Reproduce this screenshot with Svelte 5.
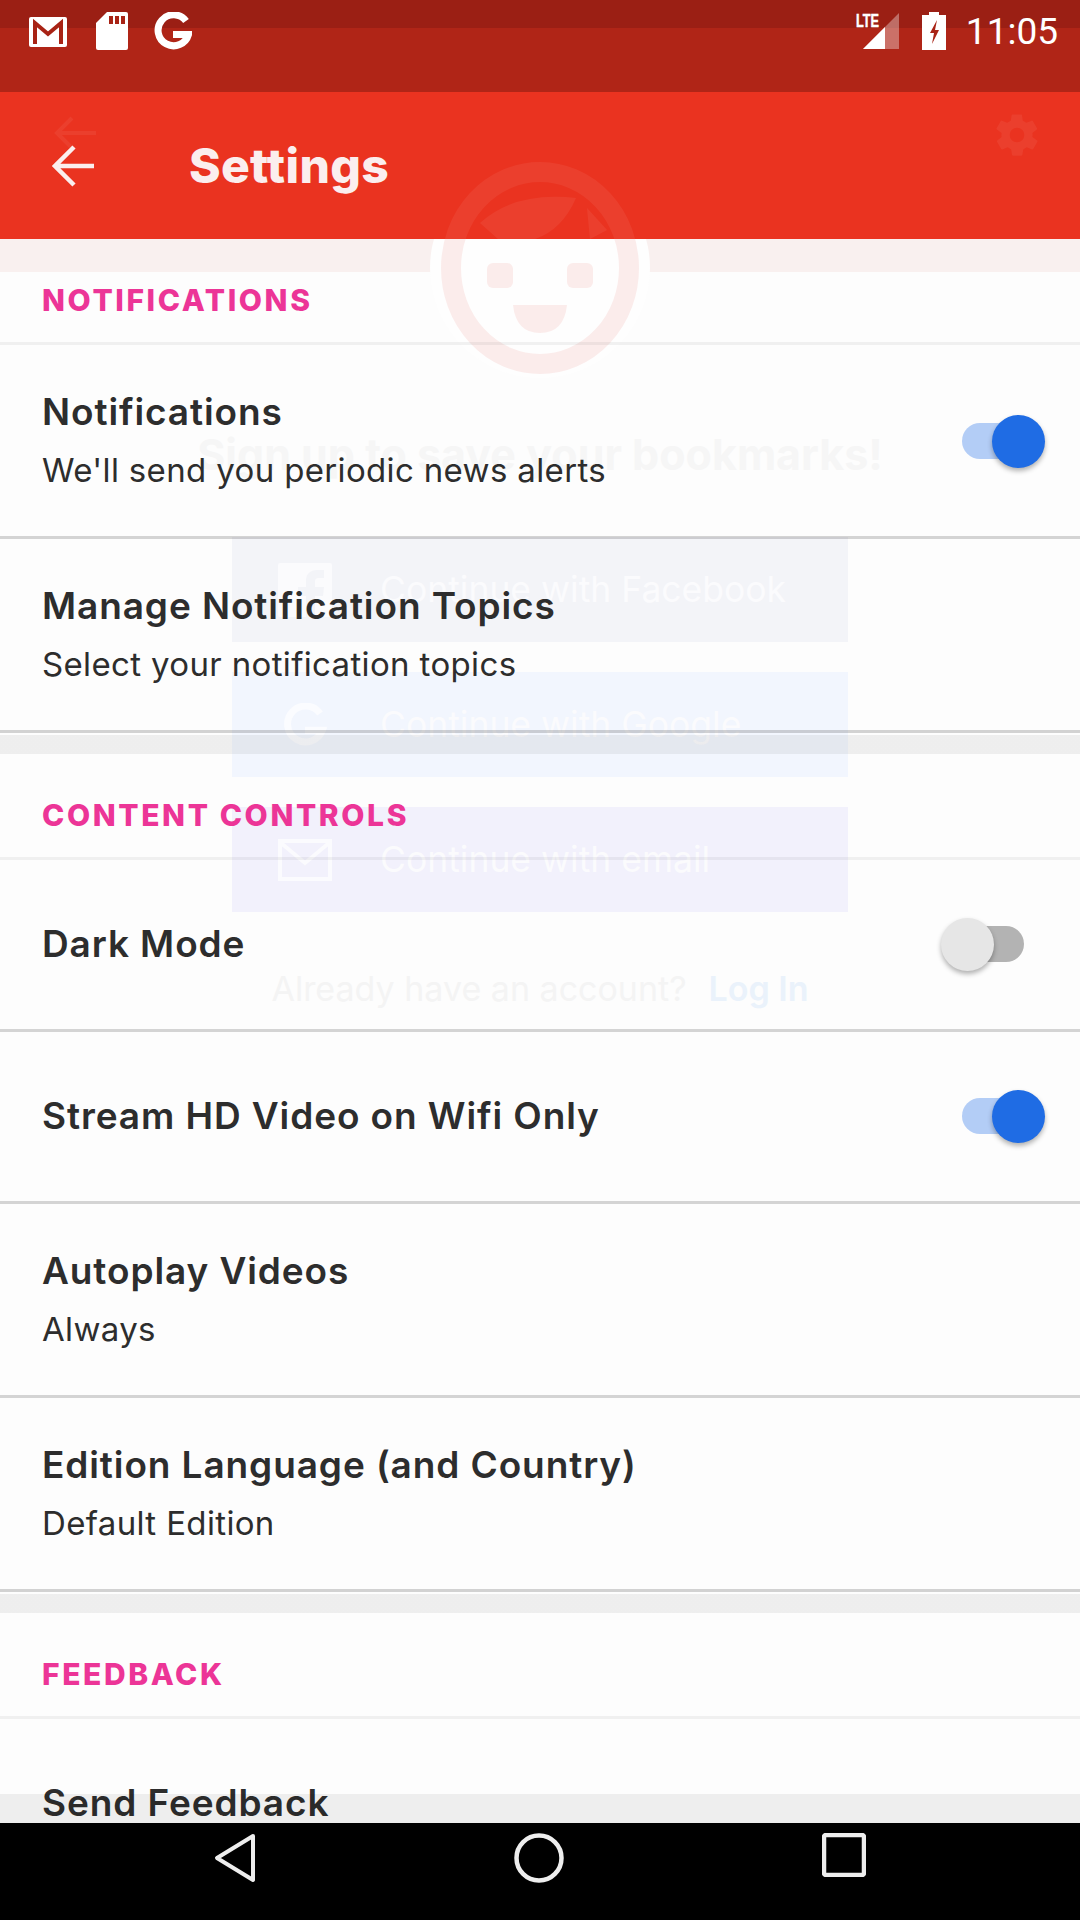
<script>
	const sections = [
		{
			title: 'NOTIFICATIONS',
			rows: [
				{ title: 'Notifications', sub: "We'll send you periodic news alerts", toggle: 'on' },
				{ title: 'Manage Notification Topics', sub: 'Select your notification topics' }
			]
		},
		{
			title: 'CONTENT CONTROLS',
			rows: [
				{ title: 'Dark Mode', toggle: 'off' },
				{ title: 'Stream HD Video on Wifi Only', toggle: 'on' },
				{ title: 'Autoplay Videos', sub: 'Always' },
				{ title: 'Edition Language (and Country)', sub: 'Default Edition' }
			]
		},
		{
			title: 'FEEDBACK',
			rows: [{ title: 'Send Feedback' }]
		}
	];
</script>

<div class="page">
	<div class="status">
		<div class="status-left">
			<svg width="40" height="32" viewBox="0 0 40 32">
				<rect x="1" y="1" width="38" height="30" rx="2" fill="#fff" />
				<path d="M7 28V7l13 11L33 7v21" fill="none" stroke="#a82315" stroke-width="4" />
			</svg>
			<svg width="32" height="38" viewBox="0 0 32 38">
				<path d="M11 0h19a2 2 0 0 1 2 2v34a2 2 0 0 1-2 2H2a2 2 0 0 1-2-2V11z" fill="#fff" />
				<path d="M13 4h4v8h-4zM19 4h4v8h-4zM25 4h4v8h-4z" fill="#a82315" />
			</svg>
			<svg width="38" height="38" viewBox="0 0 38 38">
				<path d="M32 9A15.5 15.5 0 1 0 34.500 22.500H19" fill="none" stroke="#fff" stroke-width="7" />
			</svg>
		</div>
		<div class="status-right">
			<svg class="signal" width="46" height="38" viewBox="0 0 46 38">
				<path d="M45 1v36H9z" fill="#fff" opacity="0.35" />
				<path d="M31 15v22H9z" fill="#fff" />
				<text x="2" y="15" textLength="23" lengthAdjust="spacingAndGlyphs" class="lte">LTE</text>
			</svg>
			<svg width="24" height="38" viewBox="0 0 24 38">
				<path d="M7 0h10v3h7v35H0V3h7z" fill="#fff" />
				<path d="M15 8l-7 13h4l-2 11 7-14h-4z" fill="#a82315" />
			</svg>
			<span class="time">11:05</span>
		</div>
	</div>

	<header class="appbar">
		<svg width="44" height="44" viewBox="0 0 44 44">
			<path d="M42 22H4M22 3L3 22l19 19" fill="none" stroke="#fbeeee" stroke-width="4.5" />
		</svg>
		<h1>Settings</h1>
	</header>

	<!-- the sign up screen fading out behind the settings list -->
	<div class="ghost">
		<div class="ghost-band"></div>
		<svg class="ghost-back" width="42" height="34" viewBox="0 0 42 34">
			<path d="M42 17H3M18 2L3 17l15 15" fill="none" stroke="#fff" stroke-opacity="0.06" stroke-width="4" />
		</svg>
		<svg class="ghost-gear" width="50" height="50" viewBox="0 0 24 24">
			<path
				fill="#fff"
				fill-opacity="0.06"
				d="M19.4 13c0-.3.1-.6.1-1s0-.7-.1-1l2.100-1.600c.2-.2.2-.4.1-.6l-2-3.500c-.1-.2-.4-.3-.6-.2l-2.500 1c-.5-.4-1.100-.7-1.700-1l-.4-2.600c0-.2-.2-.4-.5-.4h-4c-.3 0-.5.2-.5.400l-.4 2.600c-.6.300-1.200.6-1.700 1l-2.500-1c-.2-.1-.5 0-.6.200l-2 3.500c-.1.200-.1.400.1.600L4.600 11c0 .3-.1.600-.1 1s0 .7.1 1l-2.100 1.600c-.2.200-.2.400-.1.600l2 3.500c.1.200.4.300.6.200l2.500-1c.5.400 1.100.700 1.700 1l.4 2.600c0 .2.200.4.500.4h4c.3 0 .5-.2.5-.4l.4-2.600c.6-.3 1.200-.6 1.700-1l2.500 1c.2.100.5 0 .6-.2l2-3.500c.1-.2.100-.4-.1-.6zM12 15.500a3.500 3.500 0 1 1 0-7 3.500 3.500 0 0 1 0 7z"
			/>
		</svg>

		<svg class="logo" width="220" height="220" viewBox="0 0 220 220">
			<defs>
				<linearGradient id="logo-ink" gradientUnits="userSpaceOnUse" x1="0" y1="0" x2="0" y2="220">
					<stop offset="0.368" stop-color="#fff" stop-opacity="0.06" />
					<stop offset="0.368" stop-color="#fbeceb" />
				</linearGradient>
				<linearGradient id="logo-halo" gradientUnits="userSpaceOnUse" x1="0" y1="0" x2="0" y2="220">
					<stop offset="0.368" stop-color="#fff" stop-opacity="0" />
					<stop offset="0.368" stop-color="#fefefe" />
				</linearGradient>
			</defs>
			<ellipse cx="110" cy="110" rx="110" ry="110" fill="url(#logo-halo)" />
			<ellipse cx="110" cy="110" rx="89" ry="96" fill="none" stroke="url(#logo-ink)" stroke-width="20" />
			<path d="M50 65Q85 33 146 40Q132 72 105 81H68z" fill="url(#logo-ink)" />
			<path d="M157 50l20 22-17 9z" fill="url(#logo-ink)" />
			<rect x="57" y="105" width="26" height="25" rx="6" fill="url(#logo-ink)" />
			<rect x="137" y="105" width="26" height="25" rx="6" fill="url(#logo-ink)" />
			<path d="M83 147h54q-3 28-27 28t-27-28z" fill="url(#logo-ink)" />
		</svg>

		<h2>Sign up to save your bookmarks!</h2>

		<div class="ghost-btn fb">
			<svg width="54" height="54" viewBox="0 0 54 54">
				<path d="M2 0h50a2 2 0 0 1 2 2v50a2 2 0 0 1-2 2H37V33h8l1-9h-9v-5c0-3 1-4 4-4h5V7h-7c-7 0-11 4-11 11v6h-8v9h8v21H2a2 2 0 0 1-2-2V2a2 2 0 0 1 2-2z" fill="#fbfbfd" />
			</svg>
			<span>Continue with Facebook</span>
		</div>
		<div class="ghost-btn google">
			<svg width="54" height="44" viewBox="0 0 38 38">
				<path d="M32 9A15.500 15.500 0 1 0 34 23.500H19" fill="none" stroke="#fbfcff" stroke-width="6" />
			</svg>
			<span>Continue with Google</span>
		</div>
		<div class="ghost-btn email">
			<svg width="54" height="42" viewBox="0 0 54 42">
				<path d="M2 2h50v38H2zM3 4l24 20L51 4" fill="none" stroke="#fbfbfe" stroke-width="4" />
			</svg>
			<span>Continue with email</span>
		</div>

		<p class="ghost-login">Already have an account?<span>Log In</span></p>
	</div>

	<main class="list">
		{#each sections as section}
			<section>
				<h3>{section.title}</h3>
				{#each section.rows as row}
					<div class="row">
						<div class="row-text">
							<div class="row-title">{row.title}</div>
							{#if row.sub}
								<div class="row-sub">{row.sub}</div>
							{/if}
						</div>
						{#if row.toggle}
							<div class="toggle {row.toggle}">
								<div class="track"></div>
								<div class="thumb"></div>
							</div>
						{/if}
					</div>
				{/each}
			</section>
		{/each}
	</main>

	<div class="bottom-fade"></div>

	<nav class="navbar">
		<svg width="42" height="50" viewBox="0 0 42 50">
			<path d="M39 3L3 25l36 22z" fill="none" stroke="#eee" stroke-width="4" stroke-linejoin="round" />
		</svg>
		<svg width="50" height="50" viewBox="0 0 50 50">
			<circle cx="25" cy="25" r="22.500" fill="none" stroke="#eee" stroke-width="4.500" />
		</svg>
		<svg width="44" height="44" viewBox="0 0 44 44">
			<rect x="2" y="2" width="40" height="40" rx="2" fill="none" stroke="#eee" stroke-width="4.500" />
		</svg>
	</nav>
</div>

<style>
	:global(body) {
		margin: 0;
		background: #fdfdfd;
	}
	.page {
		position: relative;
		width: 1080px;
		height: 1920px;
		overflow: hidden;
		display: flex;
		flex-direction: column;
		background: #fdfdfd;
		font-family: Inter, 'Liberation Sans', sans-serif;
		color: #2d2d2d;
	}

	.status {
		height: 92px;
		flex: none;
		display: flex;
		justify-content: space-between;
		padding: 12px 22px 0 28px;
		box-sizing: border-box;
		background: linear-gradient(#9b1f14 28px, #b02517 28px);
	}
	.status-left {
		display: flex;
		align-items: flex-start;
		gap: 28px;
	}
	.status-left svg:first-child {
		margin-top: 4px;
	}
	.status-left svg:last-child {
		margin-left: -2px;
	}
	.status-right {
		display: flex;
		align-items: flex-start;
		gap: 22px;
	}
	.lte {
		font: 700 18px 'Liberation Sans', sans-serif;
		fill: #fff;
		stroke: #fff;
		stroke-width: 0.5px;
	}
	.time {
		margin-left: -2px;
		font: 400 37px/40px Roboto, sans-serif;
		color: #fff;
	}

	.appbar {
		position: relative;
		height: 147px;
		flex: none;
		display: flex;
		align-items: center;
		gap: 93px;
		padding: 0 0 0 52px;
		box-sizing: border-box;
		background: #ea3320;
	}
	.appbar h1 {
		margin: 0;
		font-size: 48px;
		font-weight: 800;
		letter-spacing: 0.3px;
		color: #fbeeee;
	}

	.ghost {
		position: absolute;
		inset: 0;
		z-index: 1;
		display: flex;
		flex-direction: column;
		align-items: center;
		padding-top: 158px;
		box-sizing: border-box;
	}
	.ghost-band {
		position: absolute;
		top: 239px;
		left: 0;
		right: 0;
		height: 33px;
		background: #f9f0ef;
	}
	.ghost-back {
		position: absolute;
		left: 54px;
		top: 116px;
	}
	.ghost-gear {
		position: absolute;
		left: 992px;
		top: 110px;
	}
	.logo {
		position: relative;
		flex: none;
	}
	.ghost h2 {
		margin: 49px 0 0;
		font-size: 43px;
		line-height: 54px;
		font-weight: 700;
		color: #f6f6f6;
		white-space: nowrap;
	}
	.ghost-btn {
		width: 616px;
		height: 105px;
		flex: none;
		margin-top: 30px;
		display: flex;
		align-items: center;
		padding-left: 46px;
		gap: 48px;
		box-sizing: border-box;
		font-size: 35.5px;
		color: #fbfbfd;
		white-space: nowrap;
	}
	.ghost-btn svg {
		flex: none;
	}
	.fb {
		margin-top: 56px;
		background: #f3f4f8;
	}
	.google {
		background: #f2f6fe;
	}
	.email {
		background: #f2f1fc;
	}
	.ghost-login {
		margin: 57px 0 0;
		font-size: 34px;
		line-height: 40px;
		color: #f4f4f4;
		white-space: nowrap;
	}
	.ghost-login span {
		margin-left: 22px;
		font-weight: 600;
		color: #eaf2fb;
	}

	.list {
		position: relative;
		z-index: 2;
		flex: 1;
		min-height: 0;
		overflow: hidden;
	}
	section + section {
		margin-top: 2px;
		padding-top: 19px;
		background: linear-gradient(rgba(0, 0, 0, 0.06) 19px, transparent 19px);
	}
	h3 {
		height: 106px;
		margin: 0;
		padding: 44px 42px 0;
		box-sizing: border-box;
		border-bottom: 3px solid rgba(0, 0, 0, 0.05);
		font-size: 30px;
		line-height: 34px;
		font-weight: 800;
		letter-spacing: 2.6px;
		color: #ec3597;
	}
	.row {
		min-height: 172px;
		display: flex;
		align-items: center;
		justify-content: space-between;
		padding: 0 35px 1px 42px;
		box-sizing: border-box;
		border-bottom: 3px solid rgba(0, 0, 0, 0.16);
	}
	.row:last-child {
		border-bottom-color: rgba(0, 0, 0, 0.17);
	}
	.row-title {
		font-size: 37px;
		line-height: 46px;
		font-weight: 600;
		letter-spacing: 0.9px;
	}
	.row-sub {
		margin-top: 12px;
		font-size: 33px;
		line-height: 46px;
		letter-spacing: 0.35px;
	}
	.row:has(.row-sub) {
		height: 194px;
		padding-bottom: 0;
	}

	.toggle {
		position: relative;
		width: 104px;
		height: 54px;
		flex: none;
		display: flex;
		align-items: center;
		justify-content: center;
	}
	.track {
		width: 62px;
		height: 36px;
		border-radius: 18px;
		background: #b3b3b3;
	}
	.thumb {
		position: absolute;
		top: 1px;
		left: 0;
		width: 53px;
		height: 53px;
		border-radius: 50%;
		background: #e6e6e6;
		box-shadow: 0 3px 5px rgba(0, 0, 0, 0.3);
	}
	.toggle.on .track {
		background: #b3cdf6;
	}
	.toggle.on .thumb {
		left: auto;
		right: 0;
		background: #1f6ce4;
	}

	.bottom-fade {
		position: absolute;
		left: 0;
		right: 0;
		top: 1794px;
		height: 29px;
		z-index: 2;
		background: rgba(0, 0, 0, 0.06);
	}
	.navbar {
		position: relative;
		z-index: 3;
		height: 97px;
		flex: none;
		display: flex;
		align-items: flex-start;
		background: #000;
		padding: 10px 214px 0;
		box-sizing: border-box;
		justify-content: space-between;
	}
</style>
